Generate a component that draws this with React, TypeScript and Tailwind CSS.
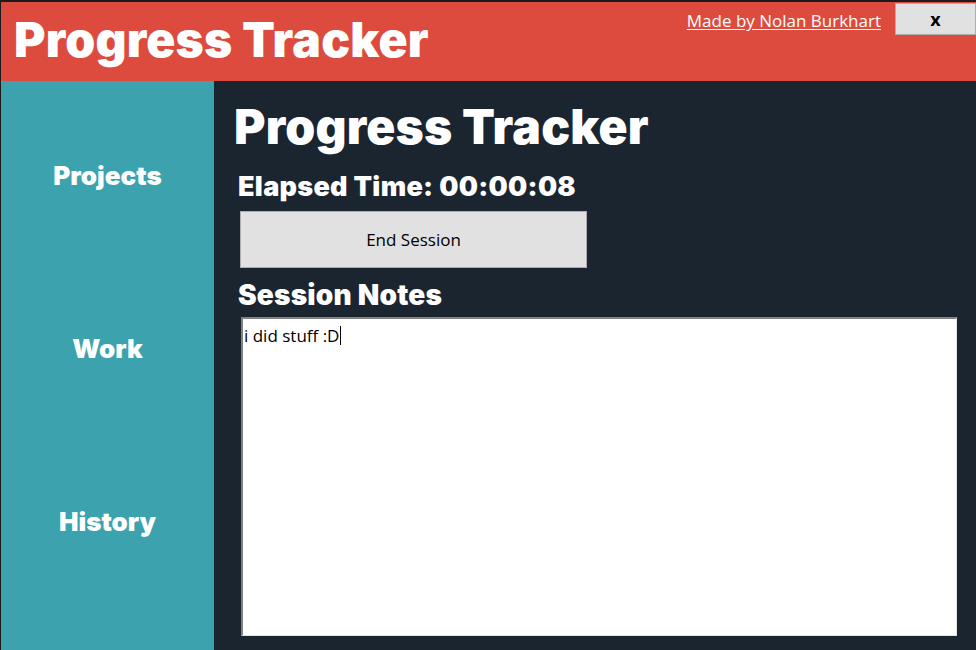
const NAV = ['Projects', 'Work', 'History'] as const

export default function App() {
  return (
    <div className="flex h-[650px] w-[976px] flex-col overflow-hidden border-t-2 border-l border-[#1b1b1b] bg-[#1a2530] font-['Open_Sans','Noto_Sans',sans-serif]">
      <header className="flex h-[79px] shrink-0 items-start justify-between bg-[#dd4b3e]">
        <h1 className="mt-[13px] ml-[13px] font-['Inter',sans-serif] text-[48px] font-black leading-[50px] tracking-[0.2px] text-white">
          Progress Tracker
        </h1>
        <div className="flex items-start">
          <a className="mt-[8px] mr-[14px] text-[17px] leading-[22px] text-white underline underline-offset-2">
            Made by Nolan Burkhart
          </a>
          <button className="mt-[1px] h-[32px] w-[81px] border border-[#adadad] bg-[#e1e1e1] text-[18px] font-bold leading-none text-black">
            x
          </button>
        </div>
      </header>

      <div className="flex min-h-0 flex-1">
        <nav className="flex w-[213px] shrink-0 flex-col items-center gap-[140px] bg-[#3ba2ae] pt-[78px] font-['Inter',sans-serif]">
          {NAV.map((n) => (
            <span key={n} className="text-[26px] font-black leading-[33px] text-white">
              {n}
            </span>
          ))}
        </nav>

        <main className="flex min-w-0 flex-1 flex-col pl-[20px] pr-[19px] font-['Inter',sans-serif]">
          <h2 className="mt-[19px] text-[48px] font-black leading-[54px] tracking-[0.2px] text-white">
            Progress Tracker
          </h2>
          <p className="mt-[17px] ml-[4px] text-[27px] font-black leading-[32px] tracking-[0.3px] text-white">
            Elapsed Time: 00:00:08
          </p>
          <button className="mt-[8px] ml-[6px] h-[57px] w-[347px] border border-[#adadad] bg-[#e1e1e1] font-['Open_Sans',sans-serif] text-[17px] text-black">
            End Session
          </button>
          <p className="mt-[11px] ml-[4px] text-[28px] font-black leading-[32px] tracking-[0.2px] text-white">
            Session Notes
          </p>
          <div className="mt-[6px] ml-[7px] h-[319px] border border-t-2 border-l-2 border-[#e3e3e3] border-t-[#828282] border-l-[#828282] bg-white px-[1px] pt-[4px] font-['Open_Sans',sans-serif] text-[17px] leading-[22px] text-black">
            i did stuff :D<span className="ml-[1px] inline-block h-[19px] w-px translate-y-[3px] bg-black" />
          </div>
        </main>
      </div>
    </div>
  )
}
